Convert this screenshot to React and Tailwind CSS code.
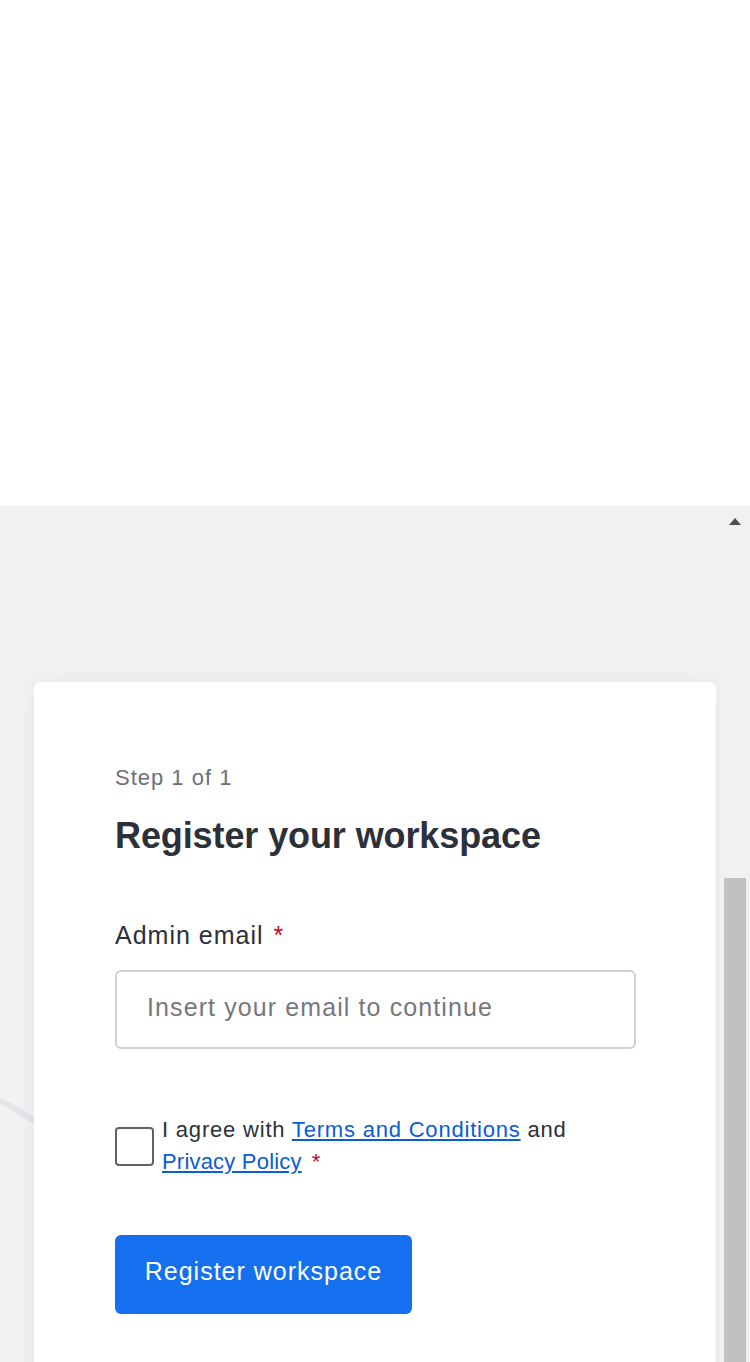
import React from 'react'

const font = { fontFamily: '"Liberation Sans", Arial, sans-serif' }

function Scrollbar() {
  return (
    <div className="w-[30px] bg-[#f1f1f1] flex flex-col items-center">
      <svg width="14" height="9" viewBox="0 0 14 9" className="mt-[11px]">
        <path d="M7 1 L13 8 L1 8 Z" fill="#505050" />
      </svg>
      <div className="mt-[352px] w-[22px] flex-1 bg-[#c1c1c1]" />
    </div>
  )
}

export default function App() {
  return (
    <div className="w-[750px] h-[1362px] flex flex-col overflow-hidden" style={font}>
      <div className="h-[506px] bg-white shrink-0" />
      <div className="flex flex-1 bg-[#f1f2f4] min-h-0">
        <div className="relative flex-1 pt-[176px] pl-[34px] pr-[4px] overflow-hidden">
          <svg className="absolute left-0 top-[590px]" width="40" height="40" viewBox="0 0 40 40">
            <path d="M0 4 L40 28" stroke="#e4e5e9" strokeWidth="6" />
          </svg>
          <div className="relative bg-white rounded-[6px] shadow-[0_0_24px_rgba(0,0,0,0.06)] h-[760px] pt-[82px] pl-[81px] pr-[80px]">
            <p className="text-[22px] leading-[28px] tracking-[1px] text-[#6b7079]">Step 1 of 1</p>
            <h1 className="mt-[22px] text-[36px] leading-[44px] font-bold text-[#2c3039] tracking-[-0.1px]">
              Register your workspace
            </h1>
            <label className="block mt-[61px] text-[25px] leading-[32px] tracking-[1px] text-[#2c3039]">
              Admin email <span className="text-[#d0021b] ml-[2px]">*</span>
            </label>
            <input
              type="email"
              placeholder="Insert your email to continue"
              className="mt-[19px] block w-[521px] h-[79px] rounded-[6px] border-2 border-[#cdd0d4] px-[30px] pb-[5px] text-[25px] tracking-[1.1px] text-[#2c3039] placeholder:text-[#76787c] outline-none"
              style={font}
            />
            <div className="mt-[65px] flex items-start gap-[8px]">
              <div className="mt-[13px] w-[39px] h-[39px] shrink-0 rounded-[4px] border-2 border-[#5f6368] bg-white" />
              <p className="text-[22px] leading-[32px] tracking-[0.8px] text-[#2c3039]">
                I agree with{' '}
                <a href="#" className="text-[#0b5cd5] underline">Terms and Conditions</a>{' '}
                and
                <br />
                <a href="#" className="text-[#0b5cd5] underline tracking-[0.2px]">Privacy Policy</a>
                <span className="text-[#d0021b] ml-[10px]">*</span>
              </p>
            </div>
            <button className="mt-[57px] h-[79px] w-[297px] rounded-[6px] bg-[#1570ef] text-white text-[25px] tracking-[1px] pb-[6px]">
              Register workspace
            </button>
          </div>
        </div>
        <Scrollbar />
      </div>
    </div>
  )
}
